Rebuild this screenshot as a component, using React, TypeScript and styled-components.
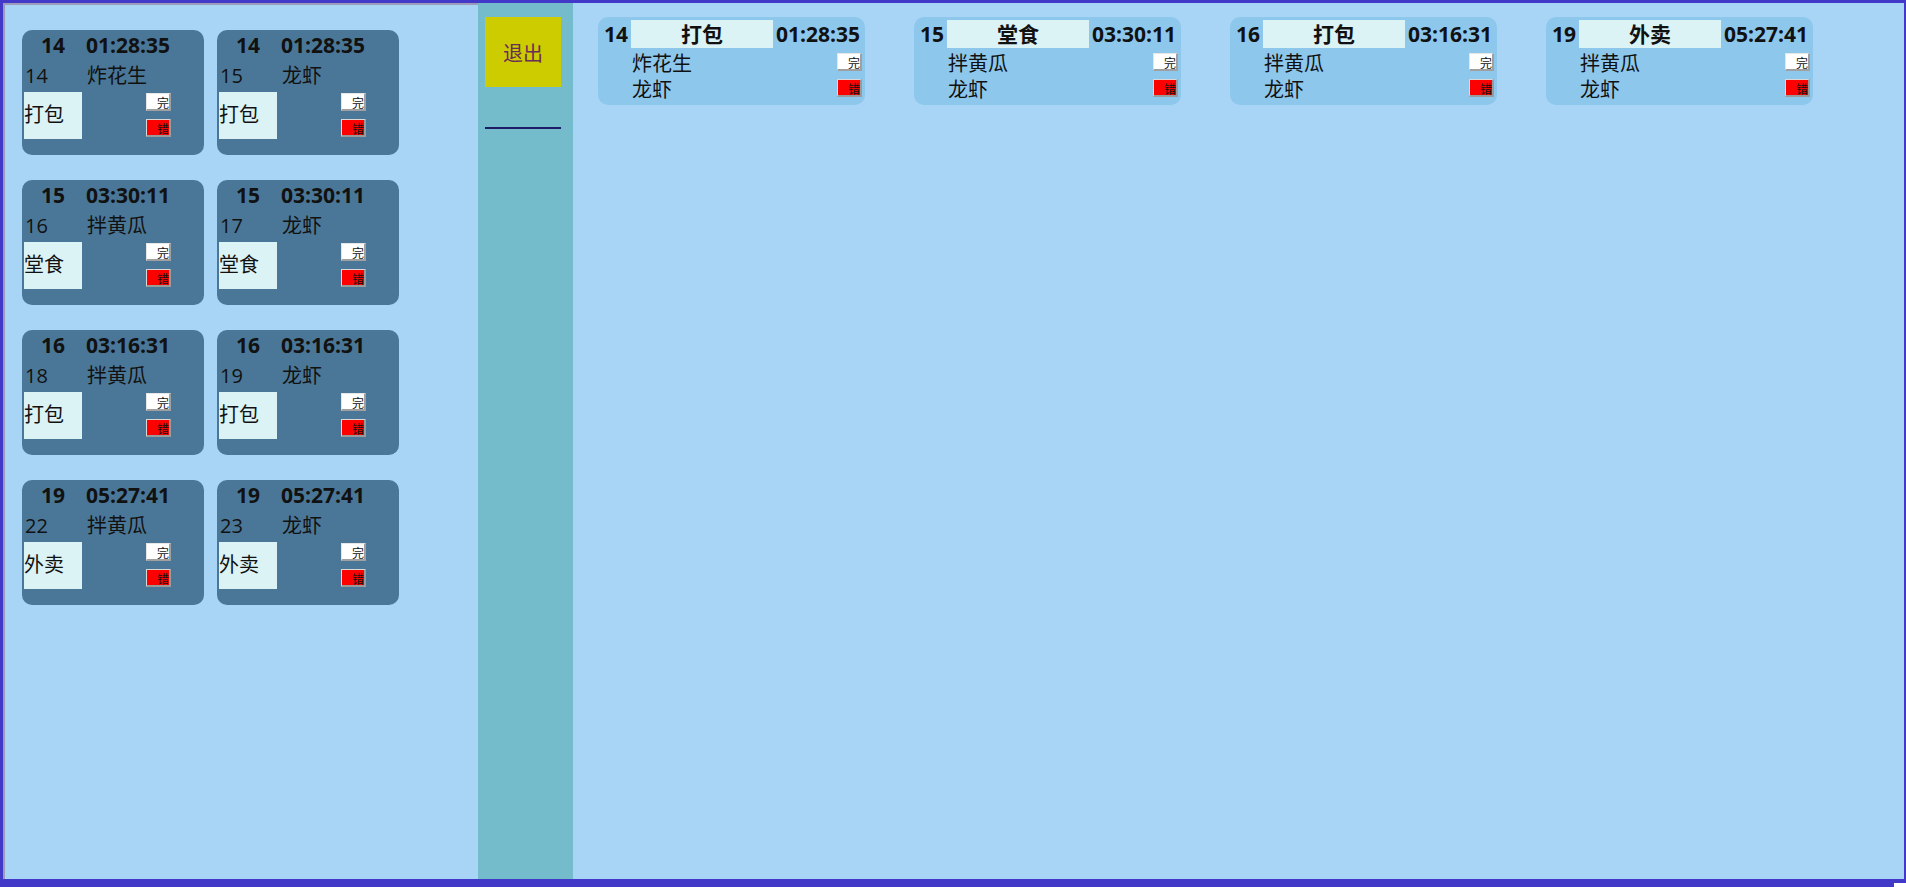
import React from "react";
import styled, { createGlobalStyle } from "styled-components";

const Global = createGlobalStyle`
  html, body { margin: 0; padding: 0; }
  body {
    width: 1906px;
    height: 887px;
    overflow: hidden;
    font-family: "Open Sans", "Noto Sans CJK SC", sans-serif;
    color: #111;
  }
  * { box-sizing: border-box; }
`;

const Frame = styled.div`
  width: 1906px;
  height: 887px;
  background: #4239c9;
  display: flex;
  flex-direction: column;
`;

const Main = styled.div`
  display: flex;
  height: 876px;
  margin: 3px 2px 0 3px;
`;

const BottomBar = styled.div`
  flex: 1;
  display: flex;
  justify-content: flex-end;
  align-items: flex-end;
`;

const Corner = styled.div`
  width: 12px;
  height: 4px;
  background: #ffffff;
`;

const LeftPanel = styled.div`
  width: 475px;
  background: #a8d5f6;
  border-top: 2px solid #9c9cba;
  border-left: 2px solid #9c9cba;
  padding: 25px 0 0 17px;
  display: flex;
  flex-direction: column;
  gap: 25px;
`;

const OrderRow = styled.div`
  display: flex;
  gap: 13px;
`;

const ItemCard = styled.div`
  width: 182px;
  height: 125px;
  background: #4a7797;
  border-radius: 10px;
  padding: 0 0 0 2px;
  display: grid;
  grid-template-columns: 58px 1fr;
  grid-template-rows: 30px 30px auto;
  column-gap: 4px;
`;

const HeadNum = styled.div`
  font-size: 21px;
  font-weight: 700;
  line-height: 30px;
  text-align: center;
`;

const HeadTime = styled.div`
  font-size: 21px;
  font-weight: 700;
  line-height: 30px;
`;

const Cell = styled.div`
  font-size: 20px;
  line-height: 31px;
  padding-left: 1px;
  white-space: nowrap;
`;

const TypeBox = styled.div`
  margin-top: 2px;
  width: 58px;
  height: 47px;
  background: #dcf3f6;
  font-size: 20px;
  display: flex;
  align-items: center;
  padding-bottom: 4px;
`;

const BtnStack = styled.div`
  margin-top: 3px;
  margin-left: 60px;
  display: flex;
  flex-direction: column;
  gap: 8px;
`;

const SmallBtn = styled.div<{ $red?: boolean }>`
  width: 25px;
  height: 18px;
  background: ${(p) => (p.$red ? "#ff0000" : "#ffffff")};
  border-style: solid;
  border-width: 1px 2px 2px 1px;
  border-color: ${(p) =>
    p.$red ? "#d8d8d8 #9a9a9a #9a9a9a #d8d8d8" : "#e6e6e6 #a0a0a0 #a0a0a0 #e6e6e6"};
  font-size: 12px;
  line-height: 14px;
  text-align: right;
  padding-right: 0;
  padding-top: 2px;
  color: #111;
  font-family: "Noto Sans CJK SC", sans-serif;
`;

const Sidebar = styled.div`
  width: 95px;
  background: #74bccb;
  padding: 14px 0 0 7px;
  display: flex;
  flex-direction: column;
`;

const ExitBtn = styled.div`
  width: 76px;
  height: 70px;
  background: #cccc00;
  color: #6a2d57;
  font-size: 20px;
  display: flex;
  align-items: center;
  justify-content: center;
`;

const Rule = styled.div`
  margin-top: 40px;
  width: 76px;
  height: 2px;
  background: #1c1c66;
`;

const RightPanel = styled.div`
  flex: 1;
  background: #a8d5f6;
  padding: 14px 0 0 25px;
  display: flex;
  align-items: flex-start;
  gap: 49px;
`;

const OrderCard = styled.div`
  width: 267px;
  height: 88px;
  background: #8ec7ec;
  border-radius: 10px;
  padding: 2px 3px 0 6px;
  display: flex;
  flex-direction: column;
`;

const OrderHead = styled.div`
  display: flex;
  align-items: center;
  height: 30px;
  font-size: 21px;
  font-weight: 700;
`;

const OrderNum = styled.div`
  width: 27px;
  line-height: 28px;
`;

const OrderType = styled.div`
  width: 142px;
  height: 28px;
  line-height: 28px;
  background: #dcf3f6;
  text-align: center;
`;

const OrderTime = styled.div`
  margin-left: 3px;
  line-height: 28px;
`;

const ItemLine = styled.div`
  display: flex;
  align-items: center;
  justify-content: space-between;
  height: 26px;
  padding-left: 28px;
  font-size: 20px;
`;

type Order = {
  num: number;
  time: string;
  type: string;
  items: { id: number; name: string }[];
};

const orders: Order[] = [
  { num: 14, time: "01:28:35", type: "打包", items: [{ id: 14, name: "炸花生" }, { id: 15, name: "龙虾" }] },
  { num: 15, time: "03:30:11", type: "堂食", items: [{ id: 16, name: "拌黄瓜" }, { id: 17, name: "龙虾" }] },
  { num: 16, time: "03:16:31", type: "打包", items: [{ id: 18, name: "拌黄瓜" }, { id: 19, name: "龙虾" }] },
  { num: 19, time: "05:27:41", type: "外卖", items: [{ id: 22, name: "拌黄瓜" }, { id: 23, name: "龙虾" }] },
];

export default function App() {
  return (
    <>
      <Global />
      <Frame>
        <Main>
          <LeftPanel>
            {orders.map((o) => (
              <OrderRow key={o.num}>
                {o.items.map((it) => (
                  <ItemCard key={it.id}>
                    <HeadNum>{o.num}</HeadNum>
                    <HeadTime>{o.time}</HeadTime>
                    <Cell>{it.id}</Cell>
                    <Cell>{it.name}</Cell>
                    <TypeBox>{o.type}</TypeBox>
                    <BtnStack>
                      <SmallBtn>完</SmallBtn>
                      <SmallBtn $red>错</SmallBtn>
                    </BtnStack>
                  </ItemCard>
                ))}
              </OrderRow>
            ))}
          </LeftPanel>
          <Sidebar>
            <ExitBtn>退出</ExitBtn>
            <Rule />
          </Sidebar>
          <RightPanel>
            {orders.map((o) => (
              <OrderCard key={o.num}>
                <OrderHead>
                  <OrderNum>{o.num}</OrderNum>
                  <OrderType>{o.type}</OrderType>
                  <OrderTime>{o.time}</OrderTime>
                </OrderHead>
                {o.items.map((it, i) => (
                  <ItemLine key={it.id}>
                    <span>{it.name}</span>
                    {i === 0 ? <SmallBtn>完</SmallBtn> : <SmallBtn $red>错</SmallBtn>}
                  </ItemLine>
                ))}
              </OrderCard>
            ))}
          </RightPanel>
        </Main>
        <BottomBar>
          <Corner />
        </BottomBar>
      </Frame>
    </>
  );
}
